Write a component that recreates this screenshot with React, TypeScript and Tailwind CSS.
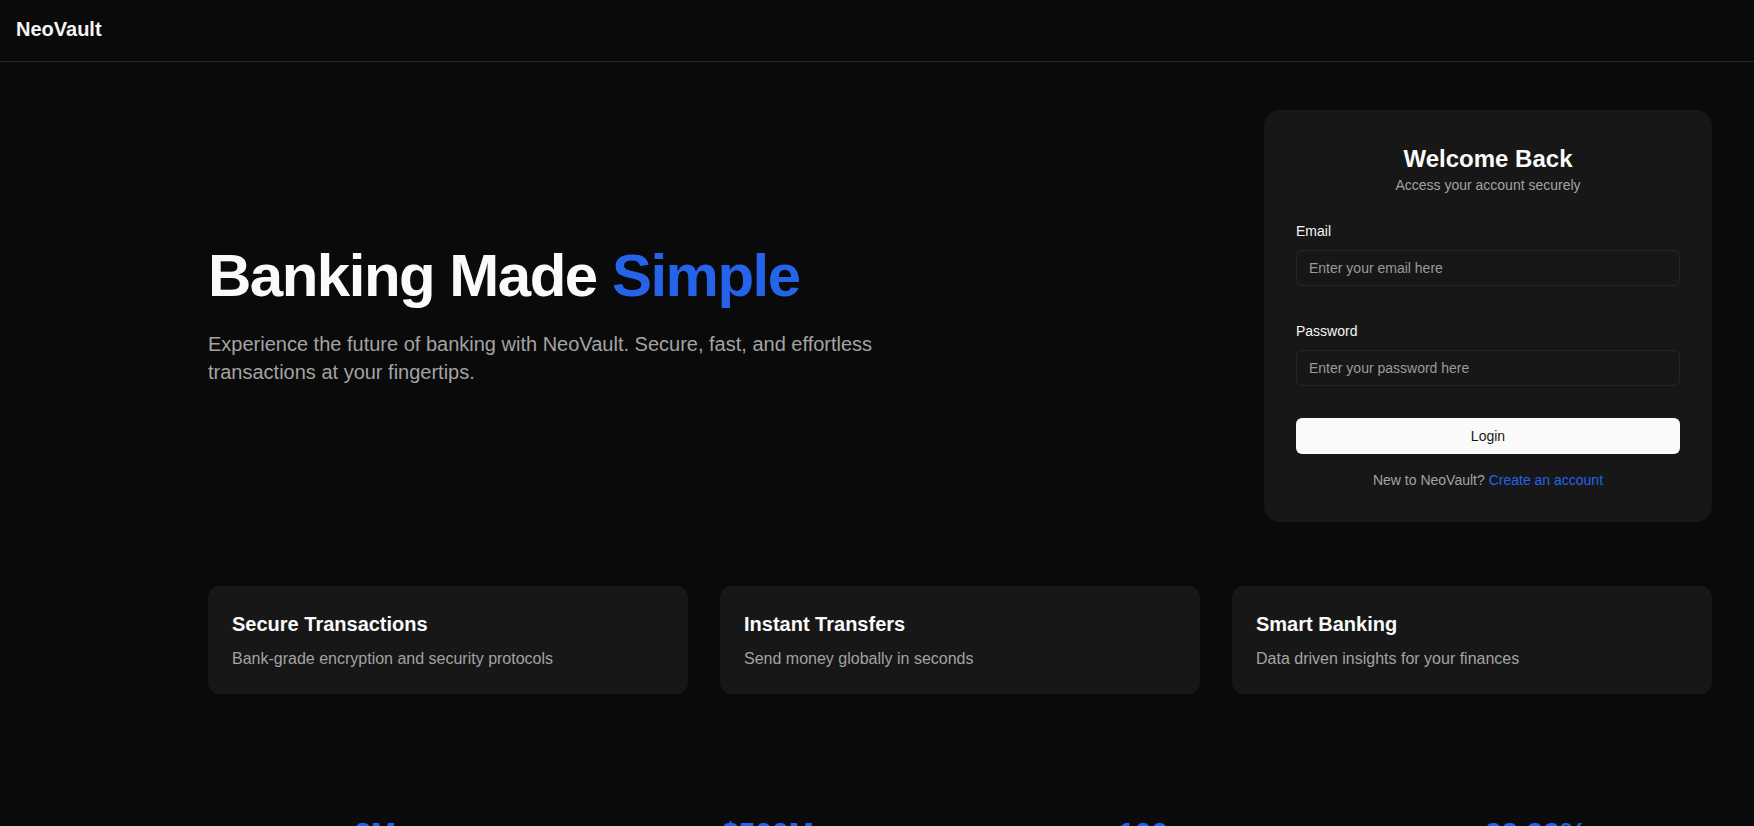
import React from "react";

const features = [
  { title: "Secure Transactions", desc: "Bank-grade encryption and security protocols" },
  { title: "Instant Transfers", desc: "Send money globally in seconds" },
  { title: "Smart Banking", desc: "Data driven insights for your finances" },
];

const stats = [
  { value: "2M+", label: "Active Users" },
  { value: "$500M", label: "Daily Transactions" },
  { value: "100+", label: "Countries" },
  { value: "99.99%", label: "Uptime" },
];

export default function App() {
  return (
    <div
      className="min-h-screen bg-[#0a0a0a] text-[#fafafa]"
      style={{ fontFamily: '"Liberation Sans", Arial, sans-serif' }}
    >
      <nav className="h-[62px] flex items-start pt-[15px] px-4 border-b border-[#262626]">
        <span className="text-xl font-bold leading-7 text-[#f5f5f5]">NeoVault</span>
      </nav>

      <main className="pl-[208px] pr-[42px] pt-12 pb-24">
        <section className="flex items-center justify-between">
          <div className="flex flex-col">
            <h1 className="text-6xl leading-none font-bold tracking-tight text-[#fafafa]">
              Banking Made <span className="text-[#2563eb]">Simple</span>
            </h1>
            <p className="mt-6 max-w-2xl text-xl leading-7 text-[#a3a3a3]">
              Experience the future of banking with NeoVault. Secure, fast, and effortless transactions at your fingertips.
            </p>
          </div>

          <div className="w-[448px] rounded-2xl bg-[#171717] px-8 pt-[33px] pb-8">
            <div className="text-center">
              <h2 className="text-2xl leading-8 font-bold text-[#fafafa]">Welcome Back</h2>
              <p className="text-sm leading-5 text-[#a3a3a3]">Access your account securely</p>
            </div>

            <div className="mt-[26px]">
              <label className="block text-sm leading-5 font-medium text-[#f5f5f5] mb-[9px]">Email</label>
              <input
                type="email"
                placeholder="Enter your email here"
                className="block w-full h-9 rounded-md border border-[#262626] bg-[#171717] px-3 text-sm text-[#fafafa] placeholder:text-[#9a9a9a] outline-none"
              />
            </div>

            <div className="mt-[35px]">
              <label className="block text-sm leading-5 font-medium text-[#f5f5f5] mb-[9px]">Password</label>
              <input
                type="password"
                placeholder="Enter your password here"
                className="block w-full h-9 rounded-md border border-[#262626] bg-[#171717] px-3 text-sm text-[#fafafa] placeholder:text-[#9a9a9a] outline-none"
              />
            </div>

            <button className="mt-8 w-full h-9 rounded-md bg-[#fafafa] text-sm text-[#171717]">
              Login
            </button>

            <p className="mt-4 text-center text-sm leading-5 text-[#a3a3a3]">
              New to NeoVault? <a className="text-[#2563eb]">Create an account</a>
            </p>
          </div>
        </section>

        <section className="mt-16 grid grid-cols-3 gap-8">
          {features.map((f) => (
            <div key={f.title} className="rounded-xl bg-[#171717] px-6 pt-6 pb-[23px]">
              <h3 className="text-xl leading-7 font-bold text-[#fafafa] mb-[9px]">{f.title}</h3>
              <p className="text-base leading-6 text-[#a3a3a3]">{f.desc}</p>
            </div>
          ))}
        </section>

        <section className="mt-[121px] grid grid-cols-4 gap-8 text-center">
          {stats.map((s) => (
            <div key={s.value}>
              <div className="text-3xl leading-9 font-bold text-[#2563eb]">{s.value}</div>
              <div className="mt-2 text-[#a3a3a3]">{s.label}</div>
            </div>
          ))}
        </section>
      </main>
    </div>
  );
}
